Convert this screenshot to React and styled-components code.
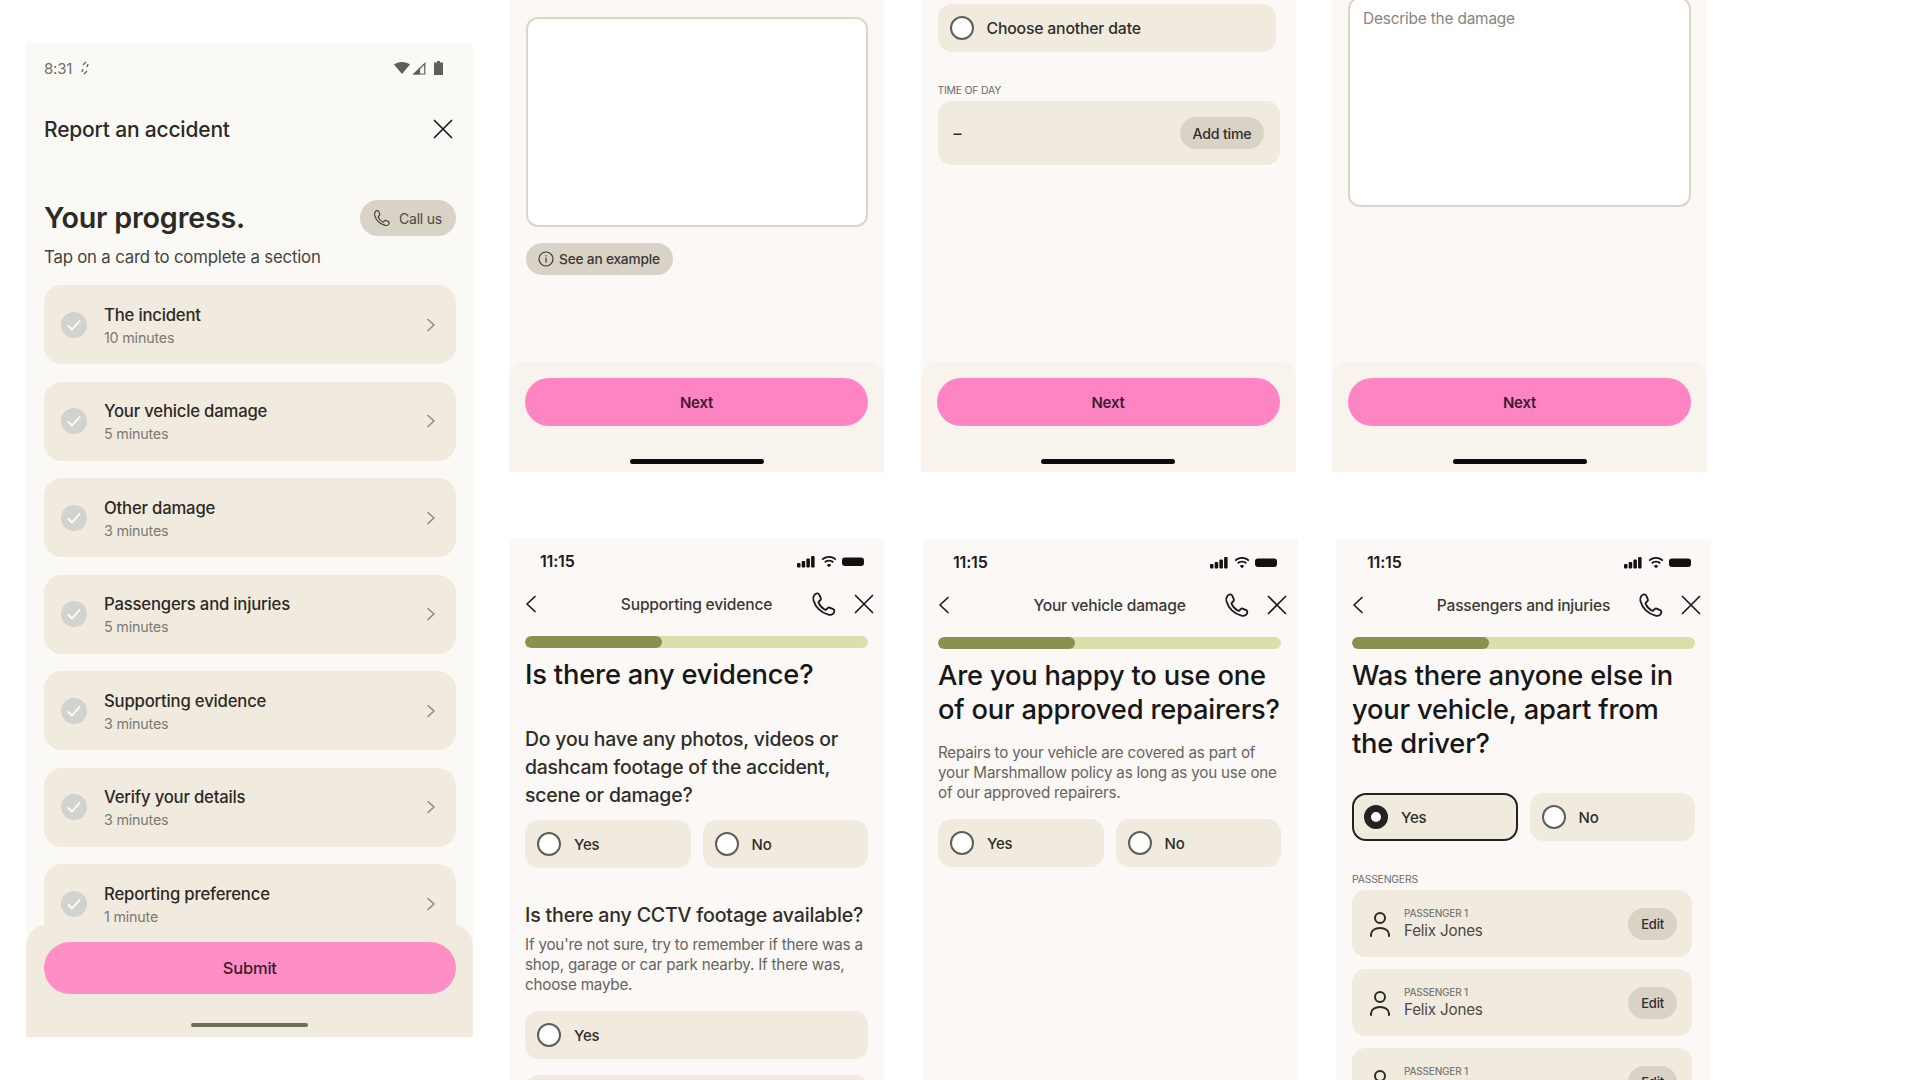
import React from 'react';
import styled, { createGlobalStyle } from 'styled-components';

const GlobalStyle = createGlobalStyle`
  html, body { margin: 0; padding: 0; background: #fff; }
  body { font-family: Inter, "Noto Sans", sans-serif; letter-spacing: -0.012em; color: #2b2a25; overflow: hidden; }
  * { box-sizing: border-box; }
`;

const Board = styled.div`
  display: flex;
  align-items: flex-start;
  width: 1920px;
  height: 1080px;
  overflow: hidden;
  padding-left: 26px;
`;

/* left android phone */
const AndroidPhone = styled.div`
  position: relative;
  flex: none;
  width: 447px;
  height: 994px;
  margin-top: 43px;
  margin-right: 36px;
  padding: 0 17.500px 0 18px;
  background: #fbf9f6;
  overflow: hidden;
`;

const AndroidStatus = styled.div`
  display: flex;
  align-items: center;
  height: 50px;
  font-size: 15px;
  color: #6f6e68;
  gap: 8px;
`;

const AndroidIcons = styled.div`
  margin-left: auto;
  margin-right: 13px;
  display: flex;
  align-items: center;
  gap: 2px;
`;

const AppBar = styled.div`
  display: flex;
  align-items: center;
  justify-content: space-between;
  height: 40px;
  margin-top: 16px;
  font-size: 21px;
  font-weight: 500;
  padding-right: 3px;
`;

const ProgressHead = styled.div`
  display: flex;
  align-items: center;
  justify-content: space-between;
  margin-top: 51px;
`;

const ProgressTitle = styled.h1`
  margin: 0;
  font-size: 28.700px;
  font-weight: 600;
  line-height: 36px;
`;

const CallPill = styled.div`
  display: flex;
  align-items: center;
  justify-content: center;
  gap: 8px;
  width: 96px;
  height: 36px;
  border-radius: 18px;
  background: #d9d2c6;
  font-size: 14px;
  color: #4a4943;
`;

const Hint = styled.div`
  margin-top: 9px;
  font-size: 16.800px;
  line-height: 24px;
  color: #44433e;
`;

const TaskList = styled.div`
  display: flex;
  flex-direction: column;
  gap: 17.500px;
  margin-top: 16px;
`;

const TaskCard = styled.div`
  display: flex;
  align-items: center;
  height: 79px;
  border-radius: 18px;
  background: #f1eadf;
  padding: 0 20px 0 17px;
`;

const CheckDot = styled.span`
  display: flex;
  align-items: center;
  justify-content: center;
  flex: none;
  width: 26px;
  height: 26px;
  border-radius: 50%;
  background: #d2d2cf;
  margin-right: 17px;
`;

const TaskText = styled.div`
  flex: 1;
`;

const TaskTitle = styled.div`
  font-size: 16.700px;
  font-weight: 500;
  line-height: 24px;
  margin-top: 1px;
`;

const TaskTime = styled.div`
  font-size: 14.300px;
  line-height: 20px;
  margin-top: 1px;
  color: #7a7a72;
`;

const AndroidFooter = styled.div`
  position: absolute;
  left: 0;
  right: 0;
  bottom: 0;
  height: 113px;
  padding: 18px 17.500px 0 18px;
  background: #f1eadf;
  border-radius: 22px 22px 0 0;
`;

const SubmitButton = styled.div`
  display: flex;
  align-items: center;
  justify-content: center;
  height: 52px;
  border-radius: 26px;
  background: #fe8ec6;
  font-size: 16.500px;
  font-weight: 500;
  color: #3c1a30;
`;

const GestureBar = styled.div`
  width: 117px;
  height: 4px;
  margin: 29px auto 0;
  border-radius: 2px;
  background: #6e6e60;
`;

/* ios artboards on the right */
const Artboards = styled.div`
  display: flex;
  flex-direction: column;
  gap: 66px;
`;

const ArtRow = styled.div`
  display: flex;
  align-items: flex-start;
  gap: ${p => p.$gap}px;
`;

const TopScreen = styled.div`
  display: flex;
  flex-direction: column;
  width: 375px;
  height: 472px;
  background: #fbf8f5;
  overflow: hidden;
`;

const TopBody = styled.div`
  flex: 1;
  padding: 0 16px 0 ${p => p.$left || 17}px;
  margin-top: ${p => p.$top || 0}px;
`;

const Footer = styled.div`
  flex: none;
  height: 110px;
  padding: 16px 16px 0;
  background: #f8f3ed;
  border-radius: 16px 16px 0 0;
`;

const NextButton = styled.div`
  display: flex;
  align-items: center;
  justify-content: center;
  height: 48px;
  border-radius: 24px;
  background: #ff84c3;
  font-size: 15px;
  font-weight: 600;
  color: #421a35;
`;

const HomeBar = styled.div`
  width: 134px;
  height: 5px;
  margin: 33px auto 0;
  border-radius: 3px;
  background: #0a0a0a;
`;

const TextBox = styled.div`
  height: ${p => p.$height}px;
  padding: 10px 13px;
  background: #fff;
  border: 2px solid #ddd6ca;
  border-radius: 12px;
  font-size: 15.400px;
  color: #85857f;
`;

const ExamplePill = styled.div`
  display: inline-flex;
  align-items: center;
  gap: 5px;
  height: 32px;
  margin-top: 16px;
  padding: 0 13px 0 12px;
  border-radius: 16px;
  background: #d9d2c6;
  font-size: 13.700px;
  font-weight: 500;
  color: #3a3933;
`;

const FieldLabel = styled.div`
  font-size: 10.400px;
  line-height: 14px;
  color: #6d6c66;
  margin-top: ${p => p.$top || 0}px;
`;

const TimeCard = styled.div`
  display: flex;
  align-items: center;
  justify-content: space-between;
  width: 342px;
  height: 64px;
  margin-top: 3px;
  padding: 0 16px 0 16px;
  border-radius: 14px;
  background: #f1eadf;
  font-weight: 500;
`;

const SmallPill = styled.div`
  display: flex;
  align-items: center;
  justify-content: center;
  height: 32px;
  padding: 0 ${p => p.$pad || 12}px;
  border-radius: 16px;
  background: #d9d2c6;
  font-size: ${p => p.$size || 14.2}px;
  font-weight: 500;
  color: #2f2e29;
`;

const Screen = styled.div`
  flex: none;
  width: 375px;
  height: 560px;
  margin-top: ${p => p.$top || 0}px;
  margin-left: ${p => p.$shift || 0}px;
  padding: 0 ${p => (p.$inset ? 17 : 16)}px 0 ${p => (p.$inset ? 15 : 16)}px;
  background: #fbf8f5;
  overflow: hidden;
`;

const IosStatus = styled.div`
  display: flex;
  align-items: center;
  justify-content: space-between;
  height: 46px;
  padding: 0 3px 0 15px;
  font-size: 16px;
  font-weight: 600;
  color: #1b1b1b;
`;

const NavBar = styled.div`
  display: grid;
  grid-template-columns: 1fr auto 1fr;
  align-items: center;
  height: 44px;
  margin-top: -2px;
`;

const NavTitle = styled.div`
  text-align: center;
  font-size: 15.600px;
  font-weight: 500;
  color: #3b3a35;
`;

const NavIcons = styled.div`
  display: flex;
  align-items: center;
  justify-content: flex-end;
  gap: 17px;
  margin-right: -6px;
`;

const ProgressTrack = styled.div`
  height: 12px;
  margin-top: 10px;
  border-radius: 6px;
  background: #dcdfac;
  overflow: hidden;
`;

const ProgressFill = styled.div`
  height: 100%;
  border-radius: 6px;
  background: #8a9150;
`;

const Question = styled.h2`
  margin: 10px 0 0;
  font-size: 27.300px;
  font-weight: 500;
  line-height: 34px;
  color: #171717;
`;

const SubQuestion = styled.h3`
  margin: ${p => p.$top || 0}px 0 0;
  font-size: ${p => p.$size || 19.4}px;
  font-weight: 500;
  line-height: 28px;
  color: #2f2e29;
`;

const BodyText = styled.p`
  margin: ${p => p.$top || 0}px 0 0;
  font-size: 15.200px;
  line-height: 20px;
  color: #66655f;
`;

const ChoiceRow = styled.div`
  display: grid;
  grid-template-columns: 1fr 1fr;
  gap: 12px;
  margin-top: ${p => p.$top || 0}px;
`;

const Choice = styled.div`
  display: flex;
  align-items: center;
  gap: 13px;
  height: 48px;
  width: ${p => (p.$width ? p.$width + 'px' : 'auto')};
  margin-top: ${p => p.$top || 0}px;
  padding: 0 ${p => (p.$selected ? 10 : 12)}px;
  border-radius: 14px;
  background: #f1eadf;
  border: ${p => (p.$selected ? '2px solid #24231f' : 'none')};
  font-size: ${p => p.$size || 15}px;
  font-weight: 500;
  color: #2f2e29;
`;

const Radio = styled.span`
  flex: none;
  width: 24px;
  height: 24px;
  border-radius: 50%;
  background: #fff;
  border: ${p => (p.$on ? '7px solid #24231f' : '2px solid #5f5e58')};
`;

const PassengerCard = styled.div`
  display: flex;
  align-items: center;
  height: 67px;
  margin-top: ${p => p.$top || 12}px;
  padding: 0 15px 0 18px;
  width: 340px;
  border-radius: 14px;
  background: #f1eadf;
`;

const PassengerText = styled.div`
  flex: 1;
  margin-left: 14px;
`;

const PassengerLabel = styled.div`
  font-size: 10px;
  line-height: 14px;
  font-weight: 500;
  color: #7a7a72;
`;

const PassengerName = styled.div`
  font-size: 15.200px;
  line-height: 20px;
  margin-top: 1px;
  color: #4a4943;
`;

const BatteryGlyph = styled.svg`
  margin-left: 6px;
`;

const Phone = ({ size = 24, color = '#1c1c1a', width = 1.7 }) => (
  <svg width={size} height={size} viewBox="0 0 24 24" fill="none" stroke={color} strokeWidth={width} strokeLinejoin="round" strokeLinecap="round">
    <path d="M3.2 3.6c.9-1 2.2-1.6 3.3-1.3.5.2.9.5 1.1 1l1.5 3.5c.2.6.1 1.1-.3 1.5L7.2 9.9c-.3.3-.4.7-.2 1.1 1.2 2.6 3.4 5 6 6.3.4.2.8.1 1.1-.2l1.5-1.5c.4-.4 1-.5 1.500-.3l3.400 1.500c.5.2.9.7 1 1.200.2 1.200-.4 2.400-1.400 3.200-1.100.8-2.500 1-4 .6C9.400 20.300 4 15 2.300 8.600c-.4-1.800-.1-3.800.9-5z" />
  </svg>
);

const Cross = ({ size = 20, width = 1.7 }) => (
  <svg width={size} height={size} viewBox="0 0 20 20" fill="none" stroke="#1c1c1a" strokeWidth={width} strokeLinecap="round">
    <path d="M1.500 1.500l17 17M18.500 1.500l-17 17" />
  </svg>
);

const BackArrow = () => (
  <svg width="12" height="18" viewBox="0 0 12 18" fill="none" stroke="#1c1c1a" strokeWidth="1.7" strokeLinecap="round" strokeLinejoin="round">
    <path d="M10 1.500L2 9l8 7.500" />
  </svg>
);

const Chevron = () => (
  <svg width="10" height="14" viewBox="0 0 10 14" fill="none" stroke="#8a8980" strokeWidth="1.500" strokeLinecap="round" strokeLinejoin="round">
    <path d="M2 1.500L8 7l-6 5.500" />
  </svg>
);

const Tick = () => (
  <svg width="16" height="14" viewBox="0 0 16 14" fill="none" stroke="#fff" strokeWidth="1.800" strokeLinecap="round" strokeLinejoin="round">
    <path d="M2.500 8l3.500 3.500L13.500 3" />
  </svg>
);

const Info = () => (
  <svg width="16" height="16" viewBox="0 0 16 16" fill="none" stroke="#3a3933" strokeWidth="1.200" strokeLinecap="round">
    <circle cx="8" cy="8" r="7" />
    <path d="M8 7.200v4M8 4.600v.3" />
  </svg>
);

const Person = () => (
  <svg width="20" height="26" viewBox="0 0 20 26" fill="none" stroke="#2b2a25" strokeWidth="2" strokeLinecap="round">
    <circle cx="10" cy="7" r="5" />
    <path d="M1 25v-1.500C1 19.500 5 17 10 17s9 2.500 9 6.500V25" />
  </svg>
);

const IosSignal = () => (
  <svg width="68" height="13" viewBox="0 0 68 13" fill="#111">
    <rect x="0" y="8" width="3.500" height="4.500" rx="1" />
    <rect x="4.700" y="6" width="3.500" height="6.500" rx="1" />
    <rect x="9.400" y="3.500" width="3.500" height="9" rx="1" />
    <rect x="14.100" y="1" width="3.500" height="11.500" rx="1" />
    <path d="M32 2.800c2.400 0 4.600.9 6.200 2.500l1.200-1.300C37.500 2 34.900 1 32 1s-5.500 1-7.400 3l1.200 1.300C27.400 3.700 29.600 2.800 32 2.800zm0 3.700c1.400 0 2.600.5 3.600 1.400l1.200-1.300C35.500 5.400 33.800 4.700 32 4.700s-3.500.7-4.800 1.900l1.200 1.300c1-.9 2.200-1.400 3.600-1.400zm0 5.800l-2.200-2.400c.6-.5 1.300-.8 2.200-.8s1.600.3 2.200.8L32 12.300z" />
    <rect x="45" y="2.500" width="22" height="8.500" rx="3" />
  </svg>
);

const AndroidGlyphs = () => (
  <AndroidIcons>
    <svg width="16" height="12" viewBox="0 0 16 12" fill="#5f5e58"><path d="M0 2.500C2 .9 5 0 8 0s6 .9 8 2.500L8 12z" /></svg>
    <svg width="14" height="13" viewBox="0 0 14 13" fill="none" stroke="#5f5e58" strokeWidth="1.200"><path d="M12.800 1.500V12H2.200z" /><path d="M7.500 7v5H2.200z" fill="#5f5e58" /></svg>
    <BatteryGlyph width="9" height="14" viewBox="0 0 9 14" fill="#5f5e58"><path d="M3 0h3v1.500h3V14H0V1.500h3z" /></BatteryGlyph>
  </AndroidIcons>
);

const tasks = [
  ['The incident', '10 minutes'],
  ['Your vehicle damage', '5 minutes'],
  ['Other damage', '3 minutes'],
  ['Passengers and injuries', '5 minutes'],
  ['Supporting evidence', '3 minutes'],
  ['Verify your details', '3 minutes'],
  ['Reporting preference', '1 minute'],
];

const IosHeader = ({ title }) => (
  <>
    <IosStatus>
      <span>11:15</span>
      <IosSignal />
    </IosStatus>
    <NavBar>
      <BackArrow />
      <NavTitle>{title}</NavTitle>
      <NavIcons>
        <Phone size={26} />
        <Cross />
      </NavIcons>
    </NavBar>
    <ProgressTrack>
      <ProgressFill style={{ width: '40%' }} />
    </ProgressTrack>
  </>
);

const YesNo = ({ top, selected }) => (
  <ChoiceRow $top={top}>
    <Choice $selected={selected}><Radio $on={selected} />Yes</Choice>
    <Choice><Radio />No</Choice>
  </ChoiceRow>
);

const Passenger = ({ top }) => (
  <PassengerCard $top={top}>
    <Person />
    <PassengerText>
      <PassengerLabel>PASSENGER 1</PassengerLabel>
      <PassengerName>Felix Jones</PassengerName>
    </PassengerText>
    <SmallPill $pad={13} $size={13}>Edit</SmallPill>
  </PassengerCard>
);

const TopFooter = () => (
  <Footer>
    <NextButton>Next</NextButton>
    <HomeBar />
  </Footer>
);

export default function App() {
  return (
    <Board>
      <GlobalStyle />
      <AndroidPhone>
        <AndroidStatus>
          <span>8:31</span>
          <svg width="10" height="14" viewBox="0 0 10 14" fill="none" stroke="#6f6e68" strokeWidth="1.500"><path d="M6 1L3 4M8 3L7 6M2 11l1-3M4 13l3-3" /></svg>
          <AndroidGlyphs />
        </AndroidStatus>
        <AppBar>
          <span>Report an accident</span>
          <Cross />
        </AppBar>
        <ProgressHead>
          <ProgressTitle>Your progress.</ProgressTitle>
          <CallPill><Phone size={18} color="#3a3933" width={1.500} />Call us</CallPill>
        </ProgressHead>
        <Hint>Tap on a card to complete a section</Hint>
        <TaskList>
          {tasks.map(([title, time]) => (
            <TaskCard key={title}>
              <CheckDot><Tick /></CheckDot>
              <TaskText>
                <TaskTitle>{title}</TaskTitle>
                <TaskTime>{time}</TaskTime>
              </TaskText>
              <Chevron />
            </TaskCard>
          ))}
        </TaskList>
        <AndroidFooter>
          <SubmitButton>Submit</SubmitButton>
          <GestureBar />
        </AndroidFooter>
      </AndroidPhone>

      <Artboards>
        <ArtRow $gap={36.5}>
          <TopScreen>
            <TopBody $top={17}>
              <TextBox $height={210} />
              <ExamplePill><Info />See an example</ExamplePill>
            </TopBody>
            <TopFooter />
          </TopScreen>
          <TopScreen>
            <TopBody $top={4}>
              <Choice $width={338} $size={15.8}><Radio />Choose another date</Choice>
              <FieldLabel $top={32}>TIME OF DAY</FieldLabel>
              <TimeCard>
                <span>–</span>
                <SmallPill>Add time</SmallPill>
              </TimeCard>
            </TopBody>
            <TopFooter />
          </TopScreen>
          <TopScreen>
            <TopBody $top={-3} $left={16}>
              <TextBox $height={210}>Describe the damage</TextBox>
            </TopBody>
            <TopFooter />
          </TopScreen>
        </ArtRow>

        <ArtRow $gap={38}>
          <Screen>
            <IosHeader title="Supporting evidence" />
            <Question>Is there any evidence?</Question>
            <SubQuestion $top={33}>Do you have any photos, videos or dashcam footage of the accident, scene or damage?</SubQuestion>
            <YesNo top={11} />
            <SubQuestion $top={33} $size={19.600}>Is there any CCTV footage available?</SubQuestion>
            <BodyText $top={6}>If you're not sure, try to remember if there was a shop, garage or car park nearby. If there was, choose maybe.</BodyText>
            <Choice $top={16}><Radio />Yes</Choice>
            <Choice $top={16} />
          </Screen>
          <Screen $top={1} $shift={1} $inset>
            <IosHeader title="Your vehicle damage" />
            <Question>Are you happy to use one of our approved repairers?</Question>
            <BodyText $top={16}>Repairs to your vehicle are covered as part of your Marshmallow policy as long as you use one of our approved repairers.</BodyText>
            <YesNo top={16} />
          </Screen>
          <Screen $top={1}>
            <IosHeader title="Passengers and injuries" />
            <Question>Was there anyone else in your vehicle, apart from the driver?</Question>
            <YesNo top={32} selected />
            <FieldLabel $top={32}>PASSENGERS</FieldLabel>
            <Passenger top={3} />
            <Passenger />
            <Passenger />
          </Screen>
        </ArtRow>
      </Artboards>
    </Board>
  );
}
